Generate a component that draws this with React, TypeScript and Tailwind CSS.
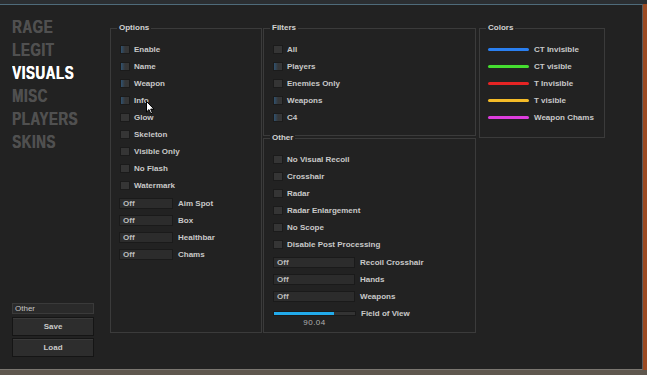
import React from 'react';

const label = "font-['Liberation_Sans',Arial,sans-serif] text-[8px] font-bold text-[#c9c9c9] leading-none";

function Check({ on, text }: { on?: boolean; text: string }) {
  return (
    <div className="h-[17px] flex items-center">
      <div
        className={
          'w-[10px] h-[9px] border border-[#1b1b1b] ' +
          (on ? 'bg-gradient-to-r from-[#2f5270] via-[#343638] to-[#363636]' : 'bg-[#353535]')
        }
      />
      <span className={label + ' ml-[4px]'}>{text}</span>
    </div>
  );
}

function Combo({ w, text }: { w: string; text: string }) {
  return (
    <div className="h-[17px] flex items-center">
      <div className={w + ' h-[11px] bg-[#2c2c2c] border border-[#1a1a1a] flex items-center pl-[3px]'}>
        <span className="font-['Liberation_Sans',Arial,sans-serif] text-[8px] font-bold text-[#bdbdbd] leading-none">Off</span>
      </div>
      <span className={label + ' ml-[5px]'}>{text}</span>
    </div>
  );
}

function Group({ title, className, children }: { title: string; className: string; children: React.ReactNode }) {
  return (
    <div className={'relative border border-[#3b3b3b] ' + className}>
      <span className={label + ' absolute -top-[5px] left-[6px] bg-[#222222] px-[2px] text-[#d2d2d2]'}>{title}</span>
      {children}
    </div>
  );
}

function ColorRow({ color, text }: { color: string; text: string }) {
  return (
    <div className="h-[17px] flex items-center">
      <div className={'w-[41px] h-[3px] rounded-full ' + color} />
      <span className={label + ' ml-[5px]'}>{text}</span>
    </div>
  );
}

function Cursor() {
  return (
    <svg className="absolute left-[35px] top-[72px]" width="9" height="14" viewBox="0 0 9 14">
      <path d="M0.5 0.5 L0.5 11 L3 8.6 L4.8 12.8 L6.4 12.1 L4.7 8.1 L8 8.1 Z" fill="#ffffff" stroke="#000000" strokeWidth="1" strokeLinejoin="round" />
    </svg>
  );
}

export default function App() {
  const nav = ['RAGE', 'LEGIT', 'VISUALS', 'MISC', 'PLAYERS', 'SKINS'];
  return (
    <div className="w-[647px] h-[375px] bg-[#5f574e] flex flex-col overflow-hidden">
      <div className="h-[4px] bg-[#2b2e31] shrink-0" />
      <div className="flex-1 flex min-h-0">
        <div className="flex-1 bg-[#222222] border-t border-t-[#4f6b7a] border-r border-r-[#5a5a5a] border-b border-b-[#7a7670] flex">
          {/* left navigation */}
          <div className="w-[110px] shrink-0 flex flex-col justify-between pt-[10px] pb-[12px] pl-[12px]">
            <div className="flex flex-col">
              {nav.map((n) => (
                <div key={n} className="h-[23px] flex items-center">
                  <span
                    className={
                      "inline-block origin-left scale-x-[0.74] font-['Liberation_Sans',Arial,sans-serif] font-bold text-[18px] leading-none tracking-[0.8px] [text-shadow:0.7px_0_0_currentColor] " +
                      (n === 'VISUALS' ? 'text-white' : 'text-[#505050]')
                    }
                  >
                    {n}
                  </span>
                </div>
              ))}
            </div>
            <div className="w-[82px] flex flex-col">
              <div className="h-[11px] bg-[#2a2a2a] border border-[#3a3a3a] flex items-center pl-[2px]">
                <span className="font-['Liberation_Sans',Arial,sans-serif] text-[8px] text-[#c4c4c4] leading-none">Other</span>
              </div>
              <button className={label + ' mt-[3px] h-[19px] bg-[#2d2d2d] border border-[#151515] shadow-[inset_0_1px_0_#3a3a3a]'}>Save</button>
              <button className={label + ' mt-[2px] h-[19px] bg-[#2d2d2d] border border-[#151515] shadow-[inset_0_1px_0_#3a3a3a]'}>Load</button>
            </div>
          </div>

          {/* content */}
          <div className="flex items-start pt-[23px]">
            <Group title="Options" className="w-[152px] h-[305px] pt-[12px] pl-[8px]">
              <div className="pl-[1px]">
                <Check on text="Enable" />
                <Check on text="Name" />
                <Check on text="Weapon" />
                <Check on text="Info" />
                <Check text="Glow" />
                <Check text="Skeleton" />
                <Check text="Visible Only" />
                <Check text="No Flash" />
                <Check text="Watermark" />
              </div>
              <div className="mt-[1px]">
                <Combo w="w-[54px]" text="Aim Spot" />
                <Combo w="w-[54px]" text="Box" />
                <Combo w="w-[54px]" text="Healthbar" />
                <Combo w="w-[54px]" text="Chams" />
              </div>
              <Cursor />
            </Group>

            <div className="ml-[1px] w-[213px] flex flex-col">
              <Group title="Filters" className="h-[108px] pt-[12px] pl-[9px]">
                <Check text="All" />
                <Check on text="Players" />
                <Check text="Enemies Only" />
                <Check on text="Weapons" />
                <Check on text="C4" />
              </Group>
              <Group title="Other" className="mt-[2px] h-[195px] pt-[12px] pl-[9px]">
                <Check text="No Visual Recoil" />
                <Check text="Crosshair" />
                <Check text="Radar" />
                <Check text="Radar Enlargement" />
                <Check text="No Scope" />
                <Check text="Disable Post Processing" />
                <div className="mt-[1px]">
                  <Combo w="w-[82px]" text="Recoil Crosshair" />
                  <Combo w="w-[82px]" text="Hands" />
                  <Combo w="w-[82px]" text="Weapons" />
                </div>
                <div className="h-[17px] flex items-center">
                  <div className="w-[83px] h-[5px] bg-[#333333] border border-[#1a1a1a] flex">
                    <div className="w-[60px] bg-[#22aaea]" />
                  </div>
                  <span className={label + ' ml-[5px]'}>Field of View</span>
                </div>
                <div className="w-[83px] -mt-[3px] text-center font-['Liberation_Sans',Arial,sans-serif] text-[8px] text-[#b0b0b0] leading-none tracking-[0.5px]">
                  90.04
                </div>
              </Group>
            </div>

            <Group title="Colors" className="ml-[3px] w-[126px] h-[110px] pt-[12px] pl-[8px]">
              <ColorRow color="bg-[#2a7ff0]" text="CT Invisible" />
              <ColorRow color="bg-[#45dd30]" text="CT visible" />
              <ColorRow color="bg-[#e52424]" text="T Invisible" />
              <ColorRow color="bg-[#f4bb28]" text="T visible" />
              <ColorRow color="bg-[#dd3ddd]" text="Weapon Chams" />
            </Group>
          </div>
        </div>
        <div className="w-[4px] bg-[#9b4a22] shrink-0" />
      </div>
      <div className="h-[5px] shrink-0" />
    </div>
  );
}
